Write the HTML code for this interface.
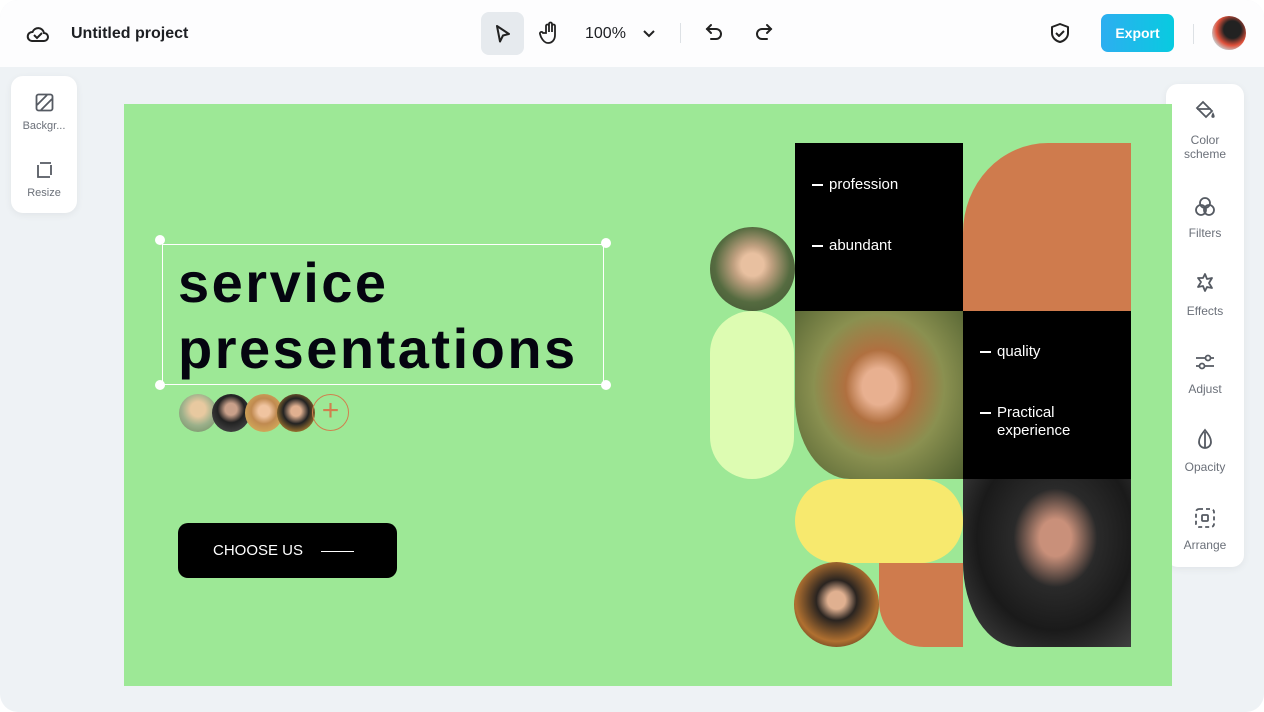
<!DOCTYPE html>
<html><head><meta charset="utf-8"><style>
*{margin:0;padding:0;box-sizing:border-box}
body{width:1264px;height:712px;background:#fff;font-family:"Liberation Sans",sans-serif;overflow:hidden;position:relative}
.frame{position:absolute;inset:0;background:#eef2f5;border-radius:18px;overflow:hidden}
.top{position:absolute;left:0;top:0;width:1264px;height:67px;background:#fdfdfe}
.abs{position:absolute}
.panel{position:absolute;background:#fff;border-radius:12px;box-shadow:0 2px 8px rgba(0,0,0,.06)}
.lbl{position:absolute;width:100%;text-align:center;font-size:12px;color:#6b7079}
.canvas{position:absolute;left:124px;top:104px;width:1048px;height:582px;background:#9de896;overflow:hidden}
.w{color:#fff;font-size:15px;position:absolute}
.w:before{content:"";display:inline-block;width:11px;height:2px;background:#fff;vertical-align:middle;margin-right:6px}
.h{position:absolute;width:10px;height:10px;border-radius:50%;background:#fff}
</style></head><body><div class="frame">
<div class="top">
 <svg class="abs" style="left:26px;top:23px" width="24" height="22" viewBox="0 0 24 22" fill="none" stroke="#222" stroke-width="2"><path d="M6 18h12a4 4 0 0 0 0-8 6 6 0 0 0-11.5-1A4.5 4.5 0 0 0 6 18z"/><path d="M8 12l3 3 5-5"/></svg>
 <div class="abs" style="left:71px;top:25px;font-size:16px;font-weight:bold;color:#1d1f23">Untitled project</div>
 <div class="abs" style="left:481px;top:12px;width:43px;height:43px;background:#e6eaee;border-radius:8px"></div>
 <svg class="abs" style="left:493px;top:23px" width="20" height="22" viewBox="0 0 20 22" fill="none" stroke="#222" stroke-width="2" stroke-linejoin="round"><path d="M4 3l12 8-6 1.5-3 6z"/></svg>
 <svg class="abs" style="left:539px;top:21px" width="22" height="24" viewBox="0 0 22 24" fill="none" stroke="#222" stroke-width="1.8" stroke-linecap="round"><path d="M7 12V5a1.5 1.5 0 0 1 3 0v6V3a1.5 1.5 0 0 1 3 0v8V5a1.5 1.5 0 0 1 3 0v9c0 5-3 8-7 8-3 0-5-2-7-6l-1-3a1.5 1.5 0 0 1 3-1z"/></svg>
 <div class="abs" style="left:585px;top:25px;font-size:16px;color:#1d1f23">100%</div>
 <svg class="abs" style="left:642px;top:29px" width="14" height="10" viewBox="0 0 14 10" fill="none" stroke="#222" stroke-width="2"><path d="M2 2l5 5 5-5"/></svg>
 <div class="abs" style="left:680px;top:23px;width:1px;height:20px;background:#dde1e5"></div>
 <svg class="abs" style="left:704px;top:22px" width="22" height="22" viewBox="0 0 22 22" fill="none" stroke="#222" stroke-width="2" stroke-linecap="round"><path d="M7 3L3 7l4 4"/><path d="M3 7h9a5 5 0 0 1 0 10H7"/></svg>
 <svg class="abs" style="left:752px;top:22px" width="22" height="22" viewBox="0 0 22 22" fill="none" stroke="#222" stroke-width="2" stroke-linecap="round"><path d="M15 3l4 4-4 4"/><path d="M19 7h-9a5 5 0 0 0 0 10h5"/></svg>
 <svg class="abs" style="left:1049px;top:22px" width="22" height="22" viewBox="0 0 22 22" fill="none" stroke="#222" stroke-width="2" stroke-linejoin="round"><path d="M11 2l8 3v6c0 5-4 8-8 9-4-1-8-4-8-9V5z"/><path d="M7 11l3 3 5-5"/></svg>
 <div class="abs" style="left:1101px;top:14px;width:73px;height:38px;border-radius:7px;background:linear-gradient(90deg,#2daef0,#08cbe0);color:#fff;font-weight:bold;font-size:14px;text-align:center;line-height:38px">Export</div>
 <div class="abs" style="left:1193px;top:24px;width:1px;height:20px;background:#dde1e5"></div>
 <div class="abs" style="left:1212px;top:16px;width:34px;height:34px;border-radius:50%;background:radial-gradient(circle at 60% 40%,#222 30%,#e0503a 55%,#c9c9c9 75%)"></div>
</div>
<div class="panel" style="left:11px;top:76px;width:66px;height:137px">
 <svg class="abs" style="left:24px;top:17px" width="19" height="19" viewBox="0 0 19 19" fill="none" stroke="#555a62" stroke-width="1.8"><rect x="1.5" y="1.5" width="16" height="16" rx="2"/><path d="M2 12L12 2M6 17L17 6"/></svg>
 <div class="lbl" style="top:44px;font-size:11px">Backgr...</div>
 <svg class="abs" style="left:24px;top:84px" width="19" height="19" viewBox="0 0 19 19" fill="none" stroke="#555a62" stroke-width="1.8"><path d="M3 5v12h12M5 3h11M16 5v10"/></svg>
 <div class="lbl" style="top:111px;font-size:11px">Resize</div>
</div>
<div class="panel" style="left:1166px;top:84px;width:78px;height:483px">
 <svg class="abs" style="left:28px;top:15px" width="22" height="22" viewBox="0 0 22 22" fill="none" stroke="#555a62" stroke-width="1.8"><path d="M9 3l9 9-6 6-9-9z M3 10h14"/><path d="M19 15c1 2 1 3 0 3s-1-1 0-3z"/></svg>
 <div class="lbl" style="top:49px;line-height:14px">Color<br>scheme</div>
 <svg class="abs" style="left:28px;top:112px" width="22" height="22" viewBox="0 0 22 22" fill="none" stroke="#555a62" stroke-width="1.8"><circle cx="11" cy="7" r="5"/><circle cx="7" cy="14" r="5"/><circle cx="15" cy="14" r="5"/></svg>
 <div class="lbl" style="top:142px">Filters</div>
 <svg class="abs" style="left:28px;top:188px" width="22" height="22" viewBox="0 0 22 22" fill="none" stroke="#555a62" stroke-width="1.8" stroke-linejoin="round"><path d="M11 2l2 5 5-1-3 5 3 5-5-1-2 4-2-5-5 1 3-5-3-4 5 0z"/></svg>
 <div class="lbl" style="top:220px">Effects</div>
 <svg class="abs" style="left:28px;top:267px" width="22" height="22" viewBox="0 0 22 22" fill="none" stroke="#555a62" stroke-width="1.8"><path d="M2 7h18M2 15h18"/><circle cx="14" cy="7" r="2.5" fill="#fff"/><circle cx="8" cy="15" r="2.5" fill="#fff"/></svg>
 <div class="lbl" style="top:298px">Adjust</div>
 <svg class="abs" style="left:28px;top:344px" width="22" height="24" viewBox="0 0 22 24" fill="none" stroke="#555a62" stroke-width="1.8"><path d="M11 2c4 5 6 8 6 12a6 6 0 0 1-12 0c0-4 2-7 6-12z"/><path d="M11 4v16" /></svg>
 <div class="lbl" style="top:376px">Opacity</div>
 <svg class="abs" style="left:28px;top:423px" width="22" height="22" viewBox="0 0 22 22" fill="none" stroke="#555a62" stroke-width="1.8" stroke-dasharray="4 3"><rect x="2" y="2" width="18" height="18" rx="3"/><rect x="8" y="8" width="6" height="6" rx="1" stroke-dasharray="none"/></svg>
 <div class="lbl" style="top:454px">Arrange</div>
</div>
<div class="canvas">
 <div class="abs" style="left:38px;top:140px;width:442px;height:141px;border:1px solid #fff"></div>
 <div class="h" style="left:31px;top:131px"></div><div class="h" style="left:477px;top:134px"></div>
 <div class="h" style="left:31px;top:276px"></div><div class="h" style="left:477px;top:276px"></div>
 <div class="abs" style="left:54px;top:146px;font-size:56px;font-weight:bold;color:#050510;line-height:66px;letter-spacing:2.5px">service<br>presentations</div>
 <div class="abs" style="left:55px;top:290px;width:38px;height:38px;border-radius:50%;background:radial-gradient(circle at 50% 40%,#e8c9a0 25%,#9bb08a 55%,#6d8a60)"></div>
 <div class="abs" style="left:88px;top:290px;width:38px;height:38px;border-radius:50%;background:radial-gradient(circle at 50% 40%,#c9a08a 20%,#222 45%,#555)"></div>
 <div class="abs" style="left:121px;top:290px;width:38px;height:38px;border-radius:50%;background:radial-gradient(circle at 50% 45%,#f0c4a0 20%,#c08a50 45%,#e0c060)"></div>
 <div class="abs" style="left:153px;top:290px;width:38px;height:38px;border-radius:50%;background:radial-gradient(circle at 50% 45%,#e0b090 18%,#222 45%,#b08030 80%)"></div>
 <div class="abs" style="left:188px;top:290px;width:37px;height:37px;border-radius:50%;border:1.5px solid #d0804e;color:#d0804e;font-size:30px;line-height:32px;text-align:center;font-weight:200">+</div>
 <div class="abs" style="left:54px;top:419px;width:219px;height:55px;border-radius:10px;background:#000;color:#fff;font-size:15px;line-height:55px;padding-left:35px">CHOOSE US<span style="display:inline-block;width:33px;height:1px;background:#fff;vertical-align:middle;margin-left:18px"></span></div>

 <div class="abs" style="left:671px;top:39px;width:168px;height:168px;background:#000"></div>
 <div class="w" style="left:688px;top:72px">profession</div>
 <div class="w" style="left:688px;top:133px">abundant</div>
 <div class="abs" style="left:839px;top:39px;width:168px;height:168px;background:#cf7b4d;border-top-left-radius:85px 90px"></div>
 <div class="abs" style="left:586px;top:123px;width:85px;height:84px;border-radius:50%;background:radial-gradient(circle at 50% 45%,#e8c0a0 18%,#c0a080 30%,#556b40 60%,#3d5030)"></div>
 <div class="abs" style="left:586px;top:207px;width:84px;height:168px;border-radius:42px;background:#ddfcb2"></div>
 <div class="abs" style="left:671px;top:207px;width:168px;height:168px;border-bottom-left-radius:55px 80px;background:radial-gradient(ellipse at 50% 45%,#e8b090 14%,#b07040 28%,#8a9050 55%,#506030)"></div>
 <div class="abs" style="left:839px;top:207px;width:168px;height:168px;background:#000"></div>
 <div class="w" style="left:856px;top:239px">quality</div>
 <div class="w" style="left:856px;top:300px;line-height:18px">Practical<br><span style="padding-left:17px">experience</span></div>
 <div class="abs" style="left:671px;top:375px;width:168px;height:84px;border-radius:42px;background:#f7e96e"></div>
 <div class="abs" style="left:839px;top:375px;width:168px;height:168px;border-bottom-left-radius:55px 85px;background:radial-gradient(ellipse at 55% 35%,#c9907a 12%,#2a2a2a 32%,#1a1a1a 60%,#4a4a4a)"></div>
 <div class="abs" style="left:755px;top:459px;width:84px;height:84px;border-bottom-left-radius:45px;background:#cf7b4d"></div>
 <div class="abs" style="left:670px;top:458px;width:85px;height:85px;border-radius:50%;background:radial-gradient(circle at 50% 45%,#e0b090 14%,#2a2420 32%,#b07030 65%,#101010)"></div>
</div>
</div></body></html>
